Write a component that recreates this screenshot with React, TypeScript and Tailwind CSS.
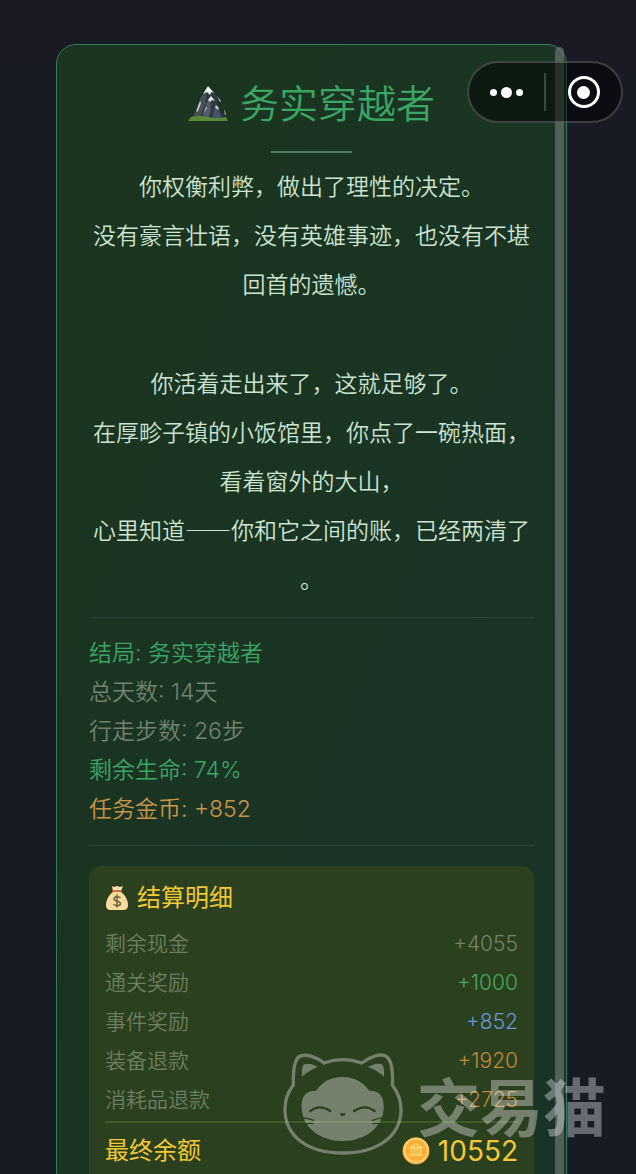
import clsx from "clsx";

type Stat = { label: string; value: string; color: string };

const stats: Stat[] = [
  { label: "结局", value: "务实穿越者", color: "text-[#3aa565]" },
  { label: "总天数", value: "14天", color: "text-[#71836f]" },
  { label: "行走步数", value: "26步", color: "text-[#71836f]" },
  { label: "剩余生命", value: "74%", color: "text-[#3aa565]" },
  { label: "任务金币", value: "+852", color: "text-[#c8964a]" },
];

const bill: Stat[] = [
  { label: "剩余现金", value: "+4055", color: "text-[#748567]" },
  { label: "通关奖励", value: "+1000", color: "text-[#45a860]" },
  { label: "事件奖励", value: "+852", color: "text-[#6c97d2]" },
  { label: "装备退款", value: "+1920", color: "text-[#c08a3c]" },
  { label: "消耗品退款", value: "+2725", color: "text-[#c08a3c]" },
];

function Mountain() {
  return (
    <svg viewBox="0 0 40 40" className="size-10" aria-hidden="true">
      <path d="M2 36 L8 26 L13 13 L19 3 L24 5 L30 14 L35 22 L39 36 Z" fill="#303b40" />
      <path d="M8 27 L13 13 L19 7 L17 20 L11 36 L4 36 Z" fill="#465158" />
      <path d="M14 36 L18 20 L22 14 L23 25 L20 36 Z" fill="#525b6c" />
      <path d="M24 36 L27 21 L32 29 L34 36 Z" fill="#46516a" />
      <path d="M29 12 L37 27 L38 36 L33 30 L30 20 Z" fill="#20302b" />
      <path d="M20 2 L26 9 L23 8 L22 11 L19 8 L15 10 Z" fill="#eef1ef" />
      <path d="M23 12 L27 17 L24 16 L22 18 L20 16 Z" fill="#e6ebe9" />
      <path d="M12 17 L13 19 L10 27 L8 28 Z M28 21 L31 24 L30 26 L27 23 Z M29 12 L33 17 L32 18 Z M36 25 L38 30 L37 31 Z M18 23 L19 24 L16 29 Z" fill="#cbd3d1" />
      <path d="M3 33 Q12 31 20 33 T38 33 L40 37 H0 Z" fill="#5e8a37" />
    </svg>
  );
}

function MoneyBag() {
  return (
    <svg viewBox="0 0 24 26" className="h-[26px] w-6" aria-hidden="true">
      <path d="M7 1 L9 2 L12 1 L15 2 L18 1 L16 6 H8 Z" fill="#fbe3ae" />
      <path d="M8 7 C4 10 1 15 1 20 C1 24 3 25 6 25 H18 C21 25 23 24 23 20 C23 15 20 10 16 7 Z" fill="#fadb9c" />
      <path d="M8 6 H16" stroke="#d4694c" strokeWidth="2" strokeLinecap="round" />
      <path d="M15.500 13 C14.500 11.500 9 11 9 14 C9 17 15.500 15.500 15.500 18.500 C15.500 21.500 9.500 21 8.500 19 M12 9.500 V22.500" fill="none" stroke="#6d6440" strokeWidth="1.500" />
    </svg>
  );
}

function Coin() {
  return (
    <svg viewBox="0 0 28 28" className="size-7" aria-hidden="true">
      <circle cx="14" cy="14" r="13.500" fill="#ee9430" />
      <circle cx="14" cy="13.500" r="13" fill="#ffcc67" />
      <circle cx="14" cy="13.500" r="10.500" fill="#fbad35" />
      <g stroke="#ffda78" fill="none" strokeWidth="1.400">
        <path d="M7.500 10.500 L14 7 L20.500 10.500 Z M9.500 11 V17 M12.500 11 V17 M15.500 11 V17 M18.500 11 V17 M7.500 18 H20.500" />
      </g>
    </svg>
  );
}

function Cat() {
  return (
    <svg viewBox="40 38 360 306" className="h-[102px] w-[120px] shrink-0" aria-hidden="true">
      <mask id="cat-face">
        <rect x="40" y="38" width="360" height="306" fill="#fff" />
        <g fill="none" stroke="#000" strokeWidth="7" strokeLinecap="round">
          <path d="M122 212 Q150 190 182 212 M253 212 Q286 190 315 212" />
          <path d="M98 232 Q115 234 132 240 M104 252 Q117 248 130 250 M342 232 Q325 234 308 240 M336 252 Q323 248 310 250" strokeWidth="4" />
        </g>
        <path d="M210 219 H228 Q227 227 219 227 Q211 227 210 219 Z" fill="#000" />
      </mask>
      <path
        d="M71 134 C70 96 72 62 88 49 C108 37 144 53 163 68 Q219 48 276 68 C298 51 334 36 351 49 C367 62 370 97 368 134 C382 153 395 182 394 212 C391 290 322 338 219 338 C116 338 49 290 46 212 C45 182 56 153 71 134 Z"
        fill="none"
        stroke="currentColor"
        strokeWidth="10"
        strokeLinejoin="round"
      />
      <path d="M97 109 C96 92 97 77 104 72 C117 67 133 73 145 80 Q118 90 97 109 Z M343 109 C344 92 343 77 336 72 C323 67 307 73 295 80 Q322 90 343 109 Z" fill="currentColor" />
      <path
        d="M96 203 C94 173 104 151 139 151 C159 125 182 110 219 110 C257 110 280 126 299 151 C333 151 344 173 342 203 C340 262 286 302 219 302 C152 302 98 262 96 203 Z"
        fill="currentColor"
        mask="url(#cat-face)"
      />
    </svg>
  );
}

// mini program menu that floats over the page
function Capsule() {
  return (
    <div className="fixed top-[61px] right-[13px] z-20 flex h-[62px] w-[156px] items-center rounded-full border-2 border-white/20 bg-black/50">
      <button type="button" aria-label="更多" className="flex h-full flex-1 items-center justify-center gap-1">
        <span className="size-[7px] rounded-full bg-white" />
        <span className="size-[11px] rounded-full bg-white" />
        <span className="size-[7px] rounded-full bg-white" />
      </button>
      <span className="h-[38px] w-0.5 bg-white/20" />
      <button type="button" aria-label="关闭" className="flex h-full flex-1 items-center justify-center">
        <span className="flex size-8 items-center justify-center rounded-full border-[3px] border-white">
          <span className="size-[13px] rounded-full bg-white" />
        </span>
      </button>
    </div>
  );
}

export default function App() {
  return (
    <div
      lang="zh-CN"
      className="relative h-screen overflow-hidden bg-linear-to-b from-[#191a24] to-[#161b24] font-['Inter','Noto_Sans_CJK_SC',sans-serif] font-[350]"
    >
      <main className="h-full overflow-y-auto pt-11 pr-[69px] pl-14 [scrollbar-width:none]">
        <article className="rounded-[20px] border border-[#32805a] bg-linear-to-br from-[#1b351e] to-[#1a3328] px-8 pt-8 pb-8">
          <h1 className="flex items-center justify-center gap-3 text-[39px] leading-[54px] font-[350] text-[#3aa565]">
            <Mountain />
            务实穿越者
          </h1>
          <div className="mx-auto mt-5 h-0.5 w-[81px] bg-[#4c7c60]" />

          {/* Story */}
          <div className="mt-2 space-y-[50px] text-center font-['Noto_Sans_CJK_SC',sans-serif] text-[23px] leading-[49px] text-[#cbe3d0] [line-break:anywhere]">
            <p>
              你权衡利弊，做出了理性的决定。
              <br />
              没有豪言壮语，没有英雄事迹，也没有不堪回首的遗憾。
            </p>
            <p>
              你活着走出来了，这就足够了。
              <br />
              在厚畛子镇的小饭馆里，你点了一碗热面，看着窗外的大山，
              <br />
              心里知道——你和它之间的账，已经两清了。
            </p>
          </div>

          {/* Stats */}
          <ul className="mt-3.5 border-y border-[#294638] py-4 text-[23px] leading-[39px]">
            {stats.map((s) => (
              <li key={s.label} className={s.color}>
                {s.label}: {s.value}
              </li>
            ))}
          </ul>

          {/* Settlement */}
          <section className="mt-5 rounded-xl bg-[#2a401f] p-4">
            <h2 className="flex items-center gap-2 text-[24px] leading-8 font-normal text-[#f0c938]">
              <MoneyBag />
              结算明细
            </h2>
            <dl className="mt-2.5 text-[21px] leading-[39px]">
              {bill.map((b) => (
                <div key={b.label} className="flex justify-between">
                  <dt className="text-[#6c7f61]">{b.label}</dt>
                  <dd className={clsx("text-right", b.color)}>{b.value}</dd>
                </div>
              ))}
            </dl>
            <div className="mt-0.5 flex items-center justify-between border-t-2 border-[#42592a] pt-2 text-[24px] leading-10 font-normal text-[#f0c938]">
              <span>最终余额</span>
              <span className="flex items-center gap-2 text-[28px]">
                <Coin />
                10552
              </span>
            </div>
          </section>
        </article>
      </main>

      <div className="fixed top-[47px] right-[72px] bottom-0 z-10 w-[9px] rounded-t-full bg-[#8c8c8c]/50" />
      <Capsule />

      <div className="pointer-events-none fixed right-[30px] bottom-[19px] z-10 flex items-center gap-3.5 text-white opacity-35">
        <Cat />
        <span className="pt-2 text-[63px] leading-none font-bold">交易猫</span>
      </div>
    </div>
  );
}
